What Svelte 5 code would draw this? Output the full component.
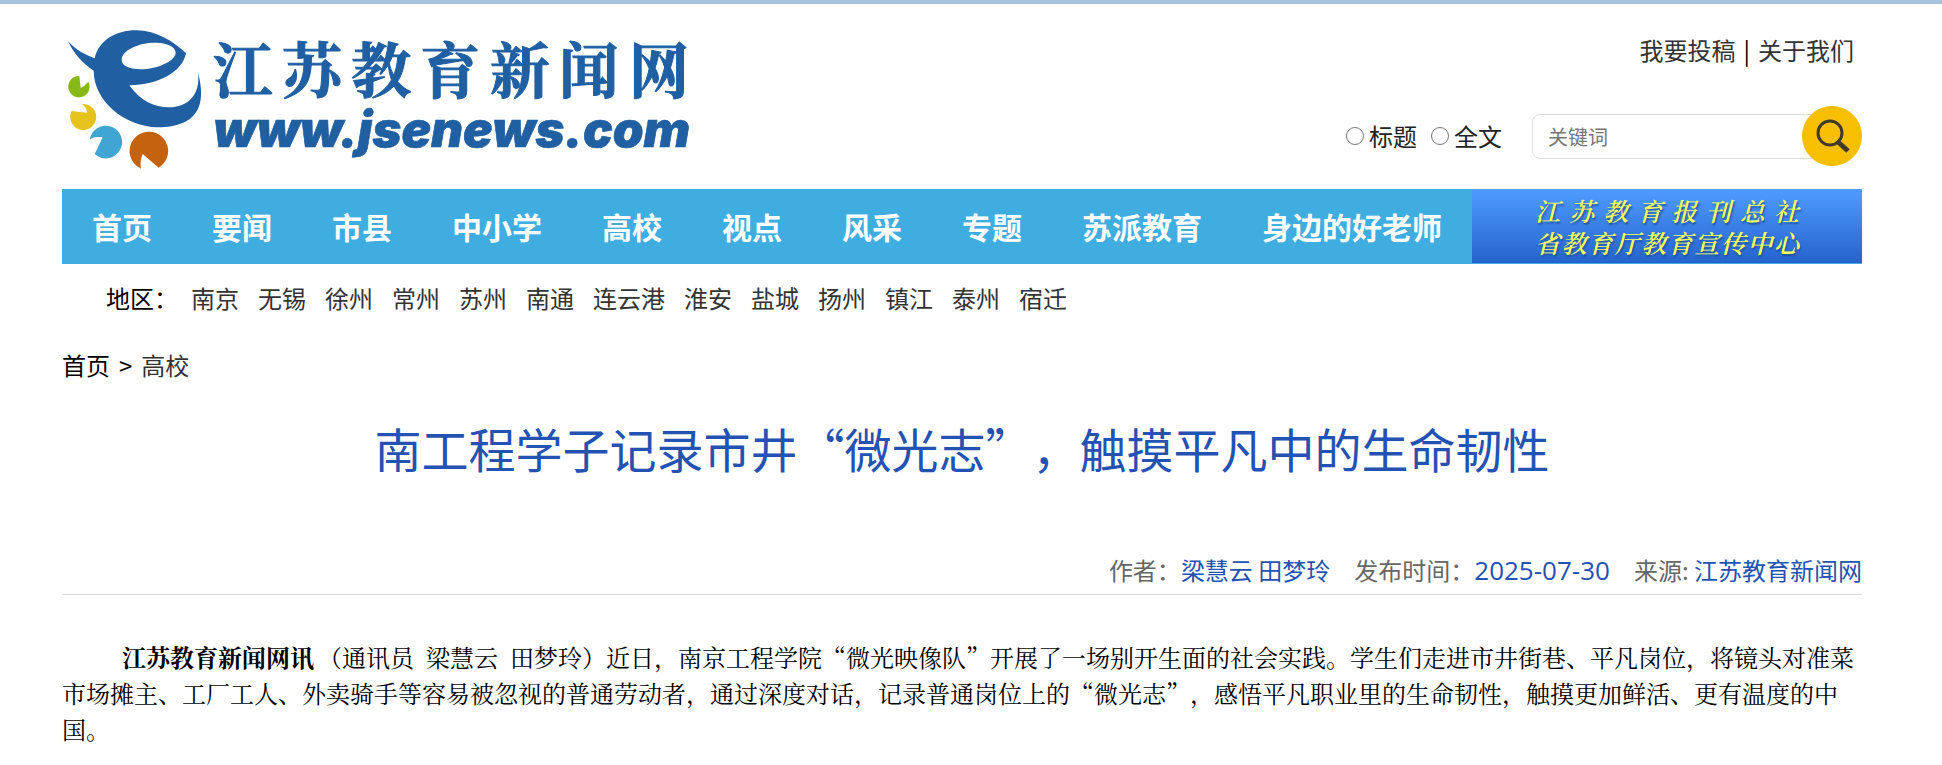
<script lang="ts">
  const navItems = ['首页', '要闻', '市县', '中小学', '高校', '视点', '风采', '专题', '苏派教育', '身边的好老师']
  const regions = ['南京', '无锡', '徐州', '常州', '苏州', '南通', '连云港', '淮安', '盐城', '扬州', '镇江', '泰州', '宿迁']
  const bannerLines = ['江苏教育报刊总社', '省教育厅教育宣传中心']

  let scope = $state('')
  let keyword = $state('')

  function search(e: SubmitEvent) {
    e.preventDefault()
    keyword = keyword.trim()
  }
</script>

<div class="page">
  <header class="header">
    <a class="logo" href="/" aria-label="江苏教育新闻网">
      <svg width="640" height="150" viewBox="36 60 1920 450">
        <path
          fill="#1f5fa2"
          fill-rule="evenodd"
          d="M54 124C78 150 104 164 134 175C146 122 196 91 258 91C320 91 376 128 408 160C398 214 326 256 238 256C272 304 314 322 356 322C414 322 452 284 444 218C456 262 456 296 446 322C428 366 382 382 322 382C222 378 132 304 131 212C94 188 68 154 54 124ZM215 180C215 150 268 127 318 128C356 129 378 142 377 160C374 185 320 208 272 208C235 207 215 196 215 180Z"
        />
        <path fill="#86b817" d="M88 228L92 264Q104 258 115 245A32 32 0 1 1 88 228Z" />
        <path fill="#e5c21c" d="M65 333L111 338C110 326 105 318 96 312A39 39 0 1 1 65 333Z" />
        <path fill="#41a5d3" d="M119 419C130 410 142 410 158 412L134 462A49 49 0 1 0 119 419Z" />
        <path fill="#c4620d" d="M273 506C270 490 272 476 278 462L326 503A58 58 0 1 0 273 506Z" />
        <text class="logo-name" y="280" x="488 696 904 1110 1320 1528 1737">江苏教育新闻网</text>
        <text class="logo-url" x="490" y="440">www.jsenews.com</text>
      </svg>
    </a>

    <div class="tools">
      <div class="links">
        <a href="/contribute">我要投稿</a>
        <span class="bar">|</span>
        <a href="/about">关于我们</a>
      </div>
      <form class="search" onsubmit={search}>
        <label class="scope"><input type="radio" name="scope" value="title" bind:group={scope} />标题</label>
        <label class="scope"><input type="radio" name="scope" value="content" bind:group={scope} />全文</label>
        <div class="field">
          <input type="text" placeholder="关键词" aria-label="关键词" bind:value={keyword} />
          <button type="submit" aria-label="搜索">
            <svg width="60" height="60" viewBox="0 0 60 60" fill="none" stroke="#3f3a26">
              <circle cx="28" cy="27" r="12" stroke-width="3" />
              <path d="M35 35L46 45" stroke-width="5" />
            </svg>
          </button>
        </div>
      </form>
    </div>
  </header>

  <nav class="nav">
    {#each navItems as item}
      <a href="/{item}">{item}</a>
    {/each}
    <a class="banner" href="/press">
      {#each bannerLines as line}
        <span class="banner-line">
          {#each line as char}<span>{char}</span>{/each}
        </span>
      {/each}
    </a>
  </nav>

  <div class="regions">
    <span>地区：</span>
    <div class="region-list">
      {#each regions as region}
        <a href="/{region}">{region}</a>
      {/each}
    </div>
  </div>

  <div class="crumbs">
    <a class="home" href="/">首页</a>
    <span>&gt;</span>
    <a href="/高校">高校</a>
  </div>

  <article>
    <h1>南工程学子记录市井“微光志”，触摸平凡中的生命韧性</h1>
    <div class="meta">
      <span>作者：<b>梁慧云 田梦玲</b></span>
      <span>发布时间：<b class="date">2025-07-30</b></span>
      <span>来源: <b>江苏教育新闻网</b></span>
    </div>
    <p><strong>江苏教育新闻网讯</strong>（通讯员&ensp;梁慧云&ensp;田梦玲）近日，南京工程学院“微光映像队”开展了一场别开生面的社会实践。学生们走进市井街巷、平凡岗位，将镜头对准菜市场摊主、工厂工人、外卖骑手等容易被忽视的普通劳动者，通过深度对话，记录普通岗位上的“微光志”，感悟平凡职业里的生命韧性，触摸更加鲜活、更有温度的中国。</p>
  </article>
</div>

<style>
  :global(body) {
    margin: 0;
    background: #fff;
  }

  .page {
    padding: 0 80px 0 62px;
    border-top: 4px solid #a6c4dd;
    color: #000;
    font-family: "Microsoft YaHei", "Noto Sans CJK SC", sans-serif;
    font-size: 24px;
    line-height: 36px;
    text-spacing-trim: space-all;
  }

  a {
    color: #333;
    text-decoration: none;
  }

  .header {
    display: flex;
    justify-content: space-between;
    height: 185px;
  }

  .logo {
    padding-top: 16px;
  }

  .logo svg {
    display: block;
  }

  .logo-name {
    fill: #1f5fa2;
    stroke: #1f5fa2;
    stroke-width: 3px;
    font-family: "Noto Serif CJK SC", "Noto Sans CJK SC", serif;
    font-size: 180px;
    font-weight: 700;
  }

  .logo-url {
    fill: #1f5fa2;
    stroke: #1f5fa2;
    stroke-width: 2px;
    font-family: Inter, "Liberation Sans", sans-serif;
    font-size: 148px;
    font-style: italic;
    font-weight: 900;
  }

  .tools {
    display: flex;
    flex-direction: column;
    align-items: flex-end;
    gap: 38px;
    padding-top: 28px;
  }

  .links {
    display: flex;
    gap: 8px;
    padding-right: 8px;
  }

  .bar {
    color: #000;
  }

  .search {
    display: flex;
    align-items: center;
  }

  .scope {
    display: flex;
    align-items: center;
    gap: 5px;
    margin-right: 14px;
    color: #222;
  }

  .scope input {
    width: 18px;
    height: 18px;
    margin: 0;
  }

  .field {
    display: flex;
    align-items: center;
    margin-left: 16px;
  }

  .field input {
    box-sizing: border-box;
    width: 300px;
    height: 45px;
    padding: 0 15px;
    border: 1px solid #ddd;
    border-radius: 8px;
    outline: none;
    font-family: inherit;
    font-size: 20px;
  }

  .field input::placeholder {
    color: #757575;
  }

  .field button {
    width: 60px;
    height: 60px;
    margin-left: -30px;
    padding: 0;
    border: none;
    border-radius: 50%;
    background: #f8bf00;
    cursor: pointer;
  }

  .field svg {
    display: block;
  }

  .nav {
    display: flex;
    height: 75px;
    background: #40ade1;
    font-size: 30px;
    font-weight: 700;
    line-height: 75px;
  }

  .nav a {
    padding: 0 30px;
    color: #fff;
    white-space: nowrap;
  }

  .nav .banner {
    display: flex;
    flex: 1;
    flex-direction: column;
    align-items: center;
    justify-content: center;
    height: 74px;
    background: linear-gradient(#4f9cff, #2563cc);
    color: #f8ff5c;
    font-family: KaiTi, "Noto Serif CJK SC", "Noto Sans CJK SC", serif;
    font-size: 25px;
    font-style: italic;
    font-weight: 600;
    line-height: 32px;
    text-shadow: 1px 2px 2px #1c4f9c;
  }

  .banner-line {
    display: flex;
    justify-content: space-between;
    width: 264px;
  }

  .regions {
    display: flex;
    gap: 13px;
    padding: 16px 44px;
  }

  .region-list {
    display: flex;
    flex-wrap: wrap;
    gap: 19px;
  }

  .crumbs {
    display: flex;
    gap: 9px;
    padding: 15px 0 14px;
  }

  .crumbs .home {
    color: #000;
  }

  h1 {
    margin: 0;
    padding: 18px 0 22px;
    color: #2452b3;
    font-size: 47px;
    font-weight: 400;
    line-height: 66px;
    text-align: center;
  }

  .meta {
    display: flex;
    flex-wrap: wrap;
    justify-content: flex-end;
    gap: 24px;
    padding: 49px 0 6px;
    border-bottom: 1px solid #ddd;
    color: #666;
  }

  .meta b {
    color: #2452b3;
    font-weight: 400;
  }

  .meta .date {
    font-family: "Open Sans", sans-serif;
    font-size: 26px;
  }

  p {
    margin: 0;
    padding: 44px 0;
    font-family: SimSun, "Noto Serif CJK SC", "Noto Sans CJK SC", serif;
    text-indent: 60px;
  }

  strong {
    margin-right: 4px;
  }
</style>
